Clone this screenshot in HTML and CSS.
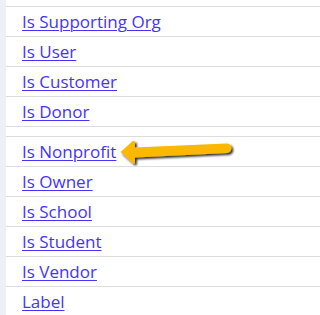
FILE: index.html
```html
<!DOCTYPE html>
<html>
<head>
<meta charset="utf-8">
<link rel="stylesheet" href="styles.css">
</head>
<body>
<div class="page">
  <div class="side"></div>
  <div class="main">
    <ul class="list">
      <li class="item"><a href="#">Is Supporting Org</a></li>
      <li class="item"><a href="#">Is User</a></li>
      <li class="item"><a href="#">Is Customer</a></li>
      <li class="item"><a href="#">Is Donor</a></li>
    </ul>
    <div class="spacer"></div>
    <ul class="list">
      <li class="item"><a href="#">Is Nonprofit</a>
        <svg class="arrow" width="125" height="32" viewBox="0 0 125 32">
          <defs>
            <filter id="sh" x="-10%" y="-30%" width="130%" height="180%">
              <feDropShadow dx="1.8" dy="1.8" stdDeviation="0.9" flood-color="#000" flood-opacity="0.85"/>
            </filter>
          </defs>
          <path filter="url(#sh)" fill="#fab800" d="M4.5 15 L16.5 4.3 Q19 2.5 19 5.5 L19 10.5 L111 6.5 A4.8 4.8 0 0 1 111.4 16 L19 20.5 L19 25 Q19 28 16.5 26 Z"/>
        </svg>
      </li>
      <li class="item"><a href="#">Is Owner</a></li>
      <li class="item"><a href="#">Is School</a></li>
      <li class="item"><a href="#">Is Student</a></li>
      <li class="item"><a href="#">Is Vendor</a></li>
      <li class="item"><a href="#">Label</a></li>
    </ul>
  </div>
</div>
</body>
</html>
```
FILE: styles.css
```css
html, body {
  margin: 0;
  padding: 0;
  background: #ffffff;
}
.page {
  display: flex;
  width: 100%;
  height: 315px;
  overflow: hidden;
  font-family: "Open Sans", "DejaVu Sans", sans-serif;
}
.side {
  width: 6px;
  flex: none;
  background: #eef0f6;
}
.main {
  flex: 1;
  padding-top: 6px;
}
.list {
  list-style: none;
  margin: 0;
  padding: 0;
}
.item {
  position: relative;
  height: 29px;
  border-top: 1px solid #dddddd;
  padding-left: 16px;
  line-height: 29px;
  font-size: 17px;
}
.list:first-child .item:last-child {
  border-bottom: 1px solid #dddddd;
}
.spacer {
  height: 9px;
}
.item a {
  color: #4433ff;
  text-decoration: underline;
  text-underline-offset: 2px;
  text-decoration-thickness: 1px;
}
.arrow {
  position: absolute;
  left: 110px;
  top: 0;
}
```
